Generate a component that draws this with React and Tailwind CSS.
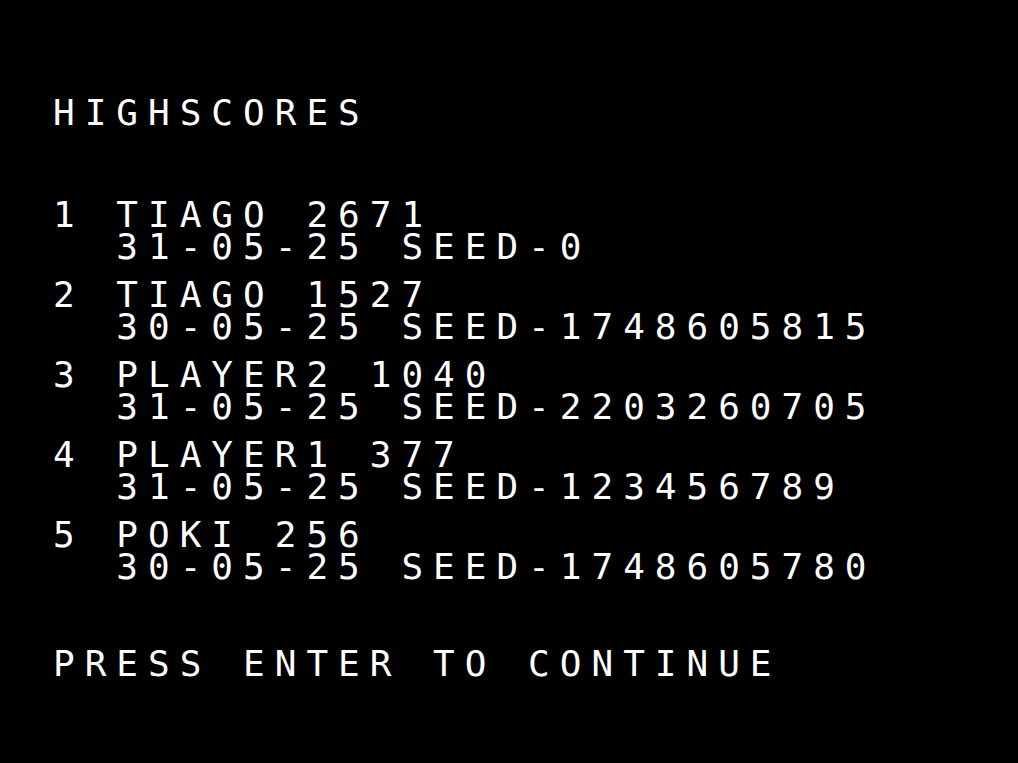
import React from 'react'

const scores = [
    { rank: 1, name: 'TIAGO', score: 2671, date: '31-05-25', seed: '0' },
    { rank: 2, name: 'TIAGO', score: 1527, date: '30-05-25', seed: '1748605815' },
    { rank: 3, name: 'PLAYER2', score: 1040, date: '31-05-25', seed: '2203260705' },
    { rank: 4, name: 'PLAYER1', score: 377, date: '31-05-25', seed: '123456789' },
    { rank: 5, name: 'POKI', score: 256, date: '30-05-25', seed: '1748605780' },
]

export default function App() {
    return (
        <div
            className="min-h-screen w-full bg-black text-white pl-[53px] pt-[97px] text-[36px] leading-[32px] tracking-[10px] whitespace-pre"
            style={{ fontFamily: '"DejaVu Sans Mono", "Liberation Mono", monospace' }}
        >
            <div>HIGHSCORES</div>

            <div className="mt-[70px] flex flex-col gap-[16px]">
                {scores.map((s) => (
                    <div key={s.rank}>
                        <div>{`${s.rank} ${s.name} ${s.score}`}</div>
                        <div>{`  ${s.date} SEED-${s.seed}`}</div>
                    </div>
                ))}
            </div>

            <div className="mt-[65px]">PRESS ENTER TO CONTINUE</div>
        </div>
    )
}
